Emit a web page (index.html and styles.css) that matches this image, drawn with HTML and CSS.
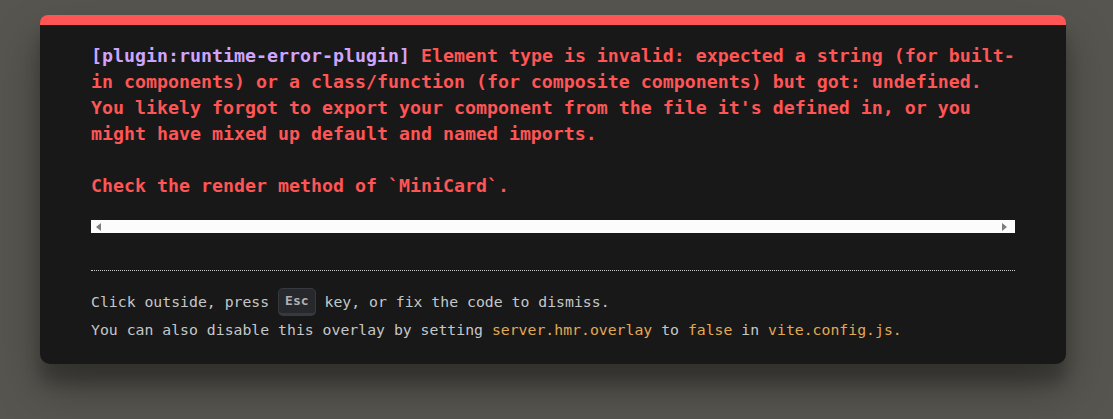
FILE: index.html
```html
<!DOCTYPE html>
<html lang="en">
<head>
<meta charset="utf-8">
<title>Vite error overlay</title>
<link rel="stylesheet" href="styles.css">
</head>
<body>
<div class="backdrop">
  <div class="window">
    <pre class="message"><span class="plugin">[plugin:runtime-error-plugin]</span> <span class="message-body">Element type is invalid: expected a string (for built-
in components) or a class/function (for composite components) but got: undefined.
You likely forgot to export your component from the file it's defined in, or you
might have mixed up default and named imports.

Check the render method of `MiniCard`.</span></pre>
    <div class="scrollbar">
      <span class="arrow arrow-left"></span>
      <span class="arrow arrow-right"></span>
    </div>
    <div class="footer">
      <div class="tip-line first">Click outside, press <kbd>Esc</kbd> key, or fix the code to dismiss.</div>
      <div class="tip-line second">You can also disable this overlay by setting <code class="yellow">server.hmr.overlay</code> to <code class="yellow">false</code> in <code class="yellow">vite.config.js.</code></div>
    </div>
  </div>
</div>
</body>
</html>
```
FILE: styles.css
```css
html, body {
  margin: 0;
  padding: 0;
  background: #57554f;
  height: 100%;
  overflow: hidden;
}

.backdrop {
  padding: 15px 0 0 40px;
}

.window {
  box-sizing: border-box;
  width: 1026px;
  background: #181818;
  color: #d8d8d8;
  border-top: 10px solid #ff5555;
  border-radius: 8px 8px 10px 10px;
  padding: 18px 51px 20px 51px;
  box-shadow: 0 24px 48px rgba(0, 0, 0, 0.30), 0 19px 15px rgba(0, 0, 0, 0.22);
  font-family: "DejaVu Sans Mono", "Liberation Mono", monospace;
}

.message {
  margin: 0;
  font-family: "DejaVu Sans Mono", "Liberation Mono", monospace;
  font-size: 18.27px;
  line-height: 26px;
  font-weight: 700;
  white-space: pre;
}

.plugin {
  color: #cfa4ff;
}

.message-body {
  color: #ff5555;
}

.scrollbar {
  position: relative;
  margin-top: 21px;
  height: 13px;
  background: #fcfcfc;
}

.arrow {
  position: absolute;
  top: 3px;
  width: 0;
  height: 0;
  border-top: 4px solid transparent;
  border-bottom: 4px solid transparent;
}

.arrow-left {
  left: 5px;
  border-right: 5px solid #7e7e7e;
}

.arrow-right {
  right: 8px;
  border-left: 5px solid #7e7e7e;
}

.footer {
  margin-top: 37px;
  border-top: 1px dotted #c9c9c9;
  padding-top: 16px;
  color: #c4c7ca;
  font-size: 14.8px;
}

.tip-line {
  white-space: nowrap;
}

.tip-line.first {
  line-height: 29px;
}

.tip-line.second {
  line-height: 28px;
}

kbd {
  display: inline-block;
  vertical-align: middle;
  box-sizing: border-box;
  height: 28px;
  font-family: "DejaVu Sans Mono", "Liberation Mono", monospace;
  font-size: 13px;
  font-weight: 700;
  line-height: 18px;
  background-color: rgb(38, 40, 44);
  color: rgb(176, 177, 181);
  padding: 3px 6px;
  border-radius: 5px;
  border-style: solid;
  border-color: rgb(54, 57, 64);
  border-width: 1px 1px 3px;
  margin-top: -2px;
}

code {
  font-family: inherit;
  font-size: inherit;
}

.yellow {
  color: #e2aa53;
}
```
